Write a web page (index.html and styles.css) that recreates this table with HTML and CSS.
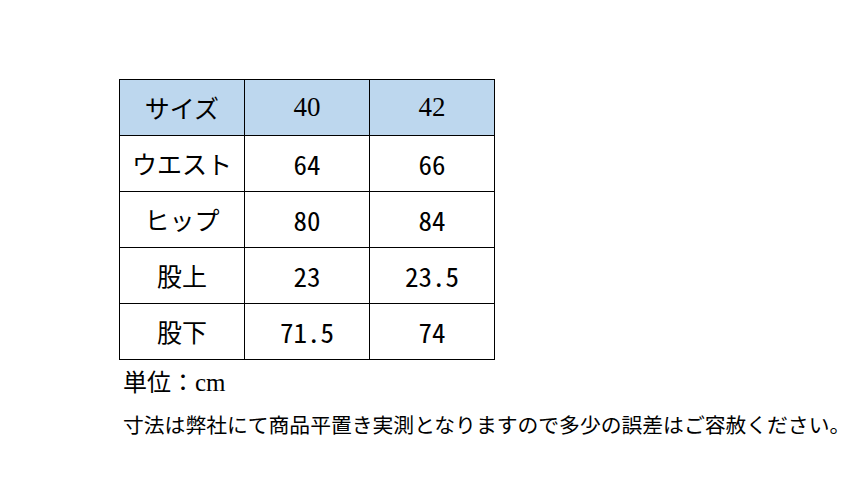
FILE: index.html
```html
<!DOCTYPE html>
<html lang="ja">
<head>
<meta charset="utf-8">
<title>サイズ表</title>
<link rel="stylesheet" href="styles.css">
</head>
<body>
<div class="page">
  <table class="size-table">
    <tr class="head">
      <td class="label">サイズ</td>
      <td class="serif">40</td>
      <td class="serif">42</td>
    </tr>
    <tr>
      <td class="label">ウエスト</td>
      <td class="num">64</td>
      <td class="num">66</td>
    </tr>
    <tr>
      <td class="label">ヒップ</td>
      <td class="num">80</td>
      <td class="num">84</td>
    </tr>
    <tr>
      <td class="label">股上</td>
      <td class="num">23</td>
      <td class="num">23.5</td>
    </tr>
    <tr>
      <td class="label">股下</td>
      <td class="num">71.5</td>
      <td class="num">74</td>
    </tr>
  </table>
  <p class="unit">単位：<span class="serif">cm</span></p>
  <p class="note">寸法は弊社にて商品平置き実測となりますので多少の誤差はご容赦ください。</p>
</div>
</body>
</html>
```
FILE: styles.css
```css
html, body {
  margin: 0;
  padding: 0;
  background: #ffffff;
}
.page {
  padding: 79px 0 0 119px;
  font-family: "Noto Sans CJK JP", sans-serif;
  color: #000;
}
.size-table {
  border-collapse: collapse;
  table-layout: fixed;
}
.size-table td {
  border: 1px solid #000;
  width: 124px;
  height: 55px;
  padding: 0;
  text-align: center;
  vertical-align: middle;
  font-size: 25px;
  line-height: 1;
}
.head td {
  background: #bdd7ee;
}
.serif {
  font-family: "Liberation Serif", serif;
}
.size-table td.serif {
  font-size: 27px;
}
.size-table td.num {
  font-family: "Noto Sans CJK JP", sans-serif;
  font-feature-settings: "hwid" 1;
  font-size: 27px;
}
.unit {
  margin: 6px 0 0 4px;
  font-size: 24px;
  line-height: 30px;
}
.unit .serif {
  font-size: 25px;
}
.note {
  margin: 14px 0 0 4px;
  font-size: 20.8px;
  line-height: 24px;
}
```
